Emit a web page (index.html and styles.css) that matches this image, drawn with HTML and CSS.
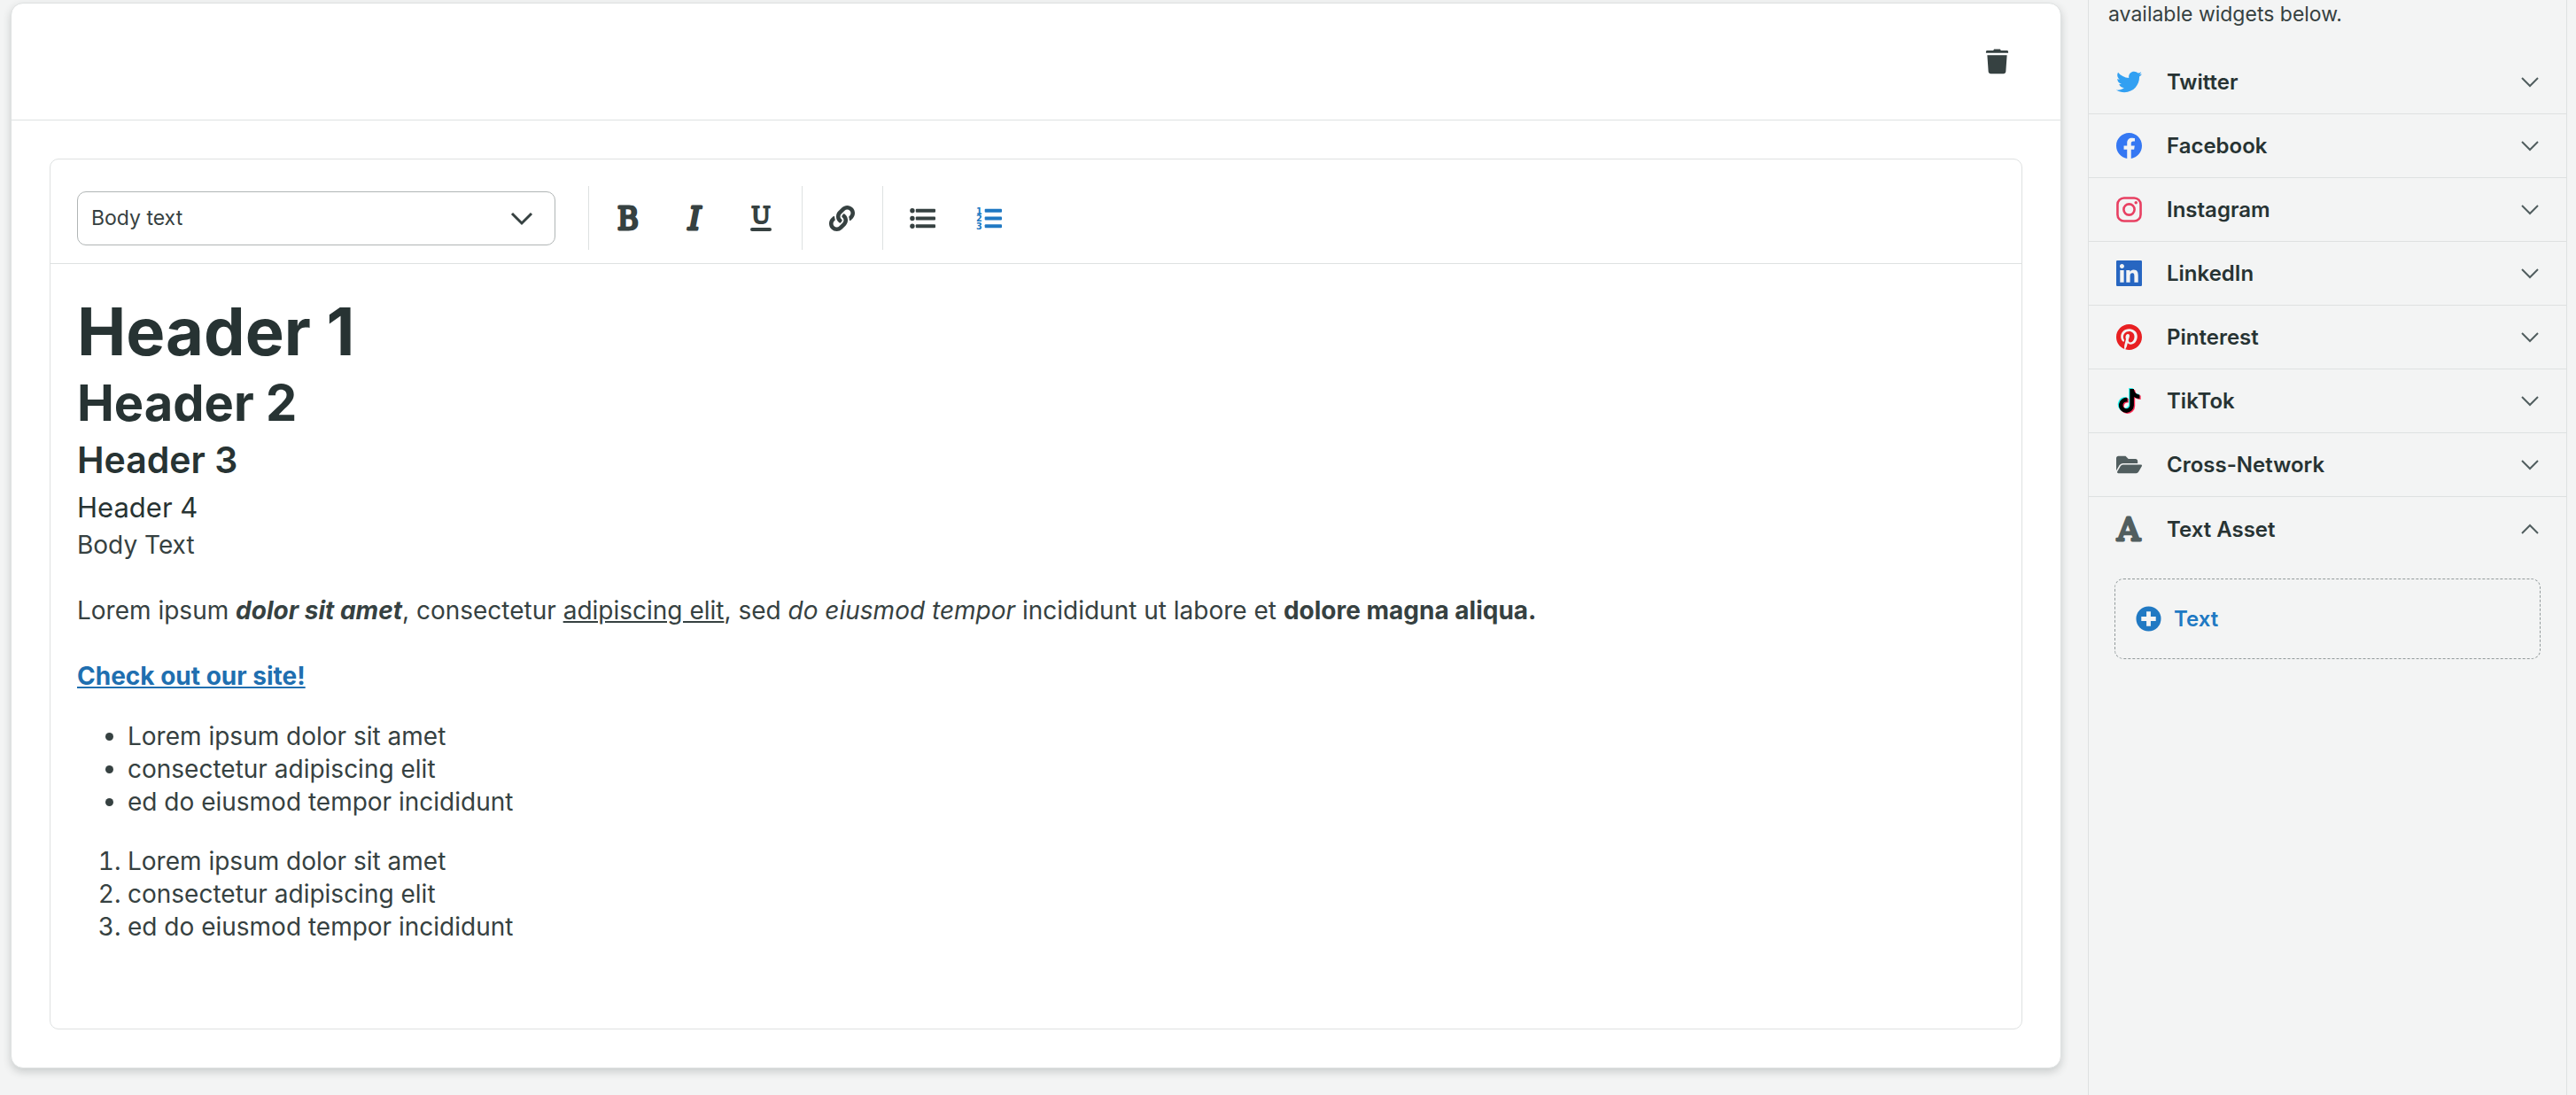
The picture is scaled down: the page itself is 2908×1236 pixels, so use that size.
FILE: index.html
```html
<!DOCTYPE html>
<html lang="en">
<head>
  <meta charset="utf-8">
  <title>Report Builder</title>
  <meta name="viewport" content="width=device-width, initial-scale=1.0">
  <link rel="stylesheet" href="styles.css">
</head>
<body>
  <main class="canvas">
    <section class="card">
      <header class="card-header">
        <button class="icon-button" type="button" aria-label="Delete">
          <svg class="icon" viewBox="0 0 30 30"><path d="M11.500 0.500h7l1 1.500h7a1.500 1.500 0 0 1 1.500 1.500V5H2V3.500A1.500 1.500 0 0 1 3.500 2h7zM3.500 7.500h23l-1.300 19a3 3 0 0 1-3 2.800H7.800a3 3 0 0 1-3-2.800z"/></svg>
        </button>
      </header>
      <div class="card-body">
        <div class="editor">
          <div class="toolbar">
            <div class="select-wrap">
              <select class="select" aria-label="Text style">
                <option>Header 1</option>
                <option>Header 2</option>
                <option>Header 3</option>
                <option>Header 4</option>
                <option selected>Body text</option>
              </select>
              <svg class="select-arrow" viewBox="0 0 26 16"><path d="M2 2l11 11L24 2"/></svg>
            </div>
            <div class="tool-group">
              <button class="tool-button" type="button" aria-label="Bold">
                <svg class="icon-lg" viewBox="0 0 48 48"><text class="glyph narrow" x="24" y="37" text-anchor="middle">B</text></svg>
              </button>
              <button class="tool-button" type="button" aria-label="Italic">
                <svg class="icon-lg" viewBox="0 0 48 48"><text class="glyph italic" x="24" y="37" text-anchor="middle">I</text></svg>
              </button>
              <button class="tool-button" type="button" aria-label="Underline">
                <svg class="icon-lg" viewBox="0 0 48 48"><text class="glyph small" x="24" y="30" text-anchor="middle">U</text><rect x="12" y="35" width="24" height="4" rx="2"/></svg>
              </button>
            </div>
            <div class="tool-group">
              <button class="tool-button" type="button" aria-label="Link">
                <svg class="icon" viewBox="0 0 512 512"><path d="M326.612 185.391c59.747 59.809 58.927 155.698.36 214.59-.11.12-.24.25-.36.37l-67.2 67.2c-59.27 59.27-155.699 59.262-214.96 0-59.27-59.26-59.27-155.7 0-214.96l37.106-37.106c9.84-9.84 26.786-3.3 27.294 10.606.648 17.722 3.826 35.527 9.69 52.721 1.986 5.822.567 12.262-3.783 16.612l-13.087 13.087c-28.026 28.026-28.905 73.66-1.155 101.96 28.024 28.579 74.086 28.749 102.325.51l67.2-67.19c28.191-28.191 28.073-73.757 0-101.83-3.701-3.694-7.429-6.564-10.341-8.569a16.037 16.037 0 0 1-6.947-12.606c-.396-10.567 3.348-21.456 11.698-29.806l21.054-21.055c5.521-5.521 14.182-6.199 20.584-1.731a152.482 152.482 0 0 1 20.522 17.197zM467.547 44.449c-59.261-59.262-155.69-59.27-214.96 0l-67.2 67.2c-.12.12-.25.25-.36.37-58.566 58.892-59.387 154.781.36 214.59a152.454 152.454 0 0 0 20.521 17.196c6.402 4.468 15.064 3.789 20.584-1.731l21.054-21.055c8.35-8.35 12.094-19.239 11.698-29.806a16.037 16.037 0 0 0-6.947-12.606c-2.912-2.005-6.64-4.875-10.341-8.569-28.073-28.073-28.191-73.639 0-101.83l67.2-67.19c28.239-28.239 74.3-28.069 102.325.51 27.75 28.3 26.872 73.934-1.155 101.96l-13.087 13.087c-4.35 4.35-5.769 10.79-3.783 16.612 5.864 17.194 9.042 34.999 9.69 52.721.509 13.906 17.454 20.446 27.294 10.606l37.106-37.106c59.271-59.259 59.271-155.699.001-214.959z"/></svg>
              </button>
            </div>
            <div class="tool-group">
              <button class="tool-button" type="button" aria-label="Bulleted list">
                <svg class="icon" viewBox="0 0 30 30"><circle cx="3" cy="6" r="2.800"/><circle cx="3" cy="15" r="2.800"/><circle cx="3" cy="24" r="2.800"/><rect x="7" y="4" width="23" height="4" rx="1"/><rect x="7" y="13" width="23" height="4" rx="1"/><rect x="7" y="22" width="23" height="4" rx="1"/></svg>
              </button>
              <button class="tool-button active" type="button" aria-label="Numbered list" aria-pressed="true">
                <svg class="icon" viewBox="0 0 30 30"><text class="digit" x="0" y="10">1</text><text class="digit" x="0" y="19">2</text><text class="digit" x="0" y="28">3</text><rect x="10" y="4" width="20" height="4" rx="1"/><rect x="10" y="13" width="20" height="4" rx="1"/><rect x="10" y="22" width="20" height="4" rx="1"/></svg>
              </button>
            </div>
          </div>
          <div class="content" contenteditable="true" spellcheck="false">
            <h1>Header 1</h1>
            <h2>Header 2</h2>
            <h3>Header 3</h3>
            <h4>Header 4</h4>
            <p>Body Text</p>
            <p>Lorem ipsum <strong><em>dolor sit amet</em></strong>, consectetur <u>adipiscing elit</u>, sed <em>do eiusmod tempor</em> incididunt ut labore et <strong>dolore magna aliqua.</strong></p>
            <p><a href="#">Check out our site!</a></p>
            <ul>
              <li>Lorem ipsum dolor sit amet</li>
              <li>consectetur adipiscing elit</li>
              <li>ed do eiusmod tempor incididunt</li>
            </ul>
            <ol>
              <li>Lorem ipsum dolor sit amet</li>
              <li>consectetur adipiscing elit</li>
              <li>ed do eiusmod tempor incididunt</li>
            </ol>
          </div>
        </div>
      </div>
    </section>
  </main>

  <aside class="sidebar">
    <p class="intro">available widgets below.</p>
    <button class="row" type="button">
      <svg class="icon twitter" viewBox="0 0 512 512"><path d="M459.37 151.716c.325 4.548.325 9.097.325 13.645 0 138.72-105.583 298.558-298.558 298.558-59.452 0-114.68-17.219-161.137-47.106 8.447.974 16.568 1.299 25.34 1.299 49.055 0 94.213-16.568 130.274-44.832-46.132-.975-84.792-31.188-98.112-72.772 6.498.974 12.995 1.624 19.818 1.624 9.421 0 18.843-1.3 27.614-3.573-48.081-9.747-84.143-51.98-84.143-102.985v-1.299c13.969 7.797 30.214 12.67 47.431 13.319-28.264-18.843-46.781-51.005-46.781-87.391 0-19.492 5.197-37.36 14.294-52.954 51.655 63.675 129.3 105.258 216.365 109.807-1.624-7.797-2.599-15.918-2.599-24.04 0-57.828 46.782-104.934 104.934-104.934 30.213 0 57.502 12.67 76.67 33.137 23.715-4.548 46.456-13.32 66.599-25.34-7.798 24.366-24.366 44.833-46.132 57.827 21.117-2.273 41.584-8.122 60.426-16.243-14.292 20.791-32.161 39.308-52.628 54.253z"/></svg>
      <span class="label">Twitter</span>
      <svg class="chevron" viewBox="0 0 20 12"><path d="M1 1l9 9 9-9"/></svg>
    </button>
    <button class="row" type="button">
      <svg class="icon facebook" viewBox="0 0 24 24"><path d="M24 12.073c0-6.627-5.373-12-12-12s-12 5.373-12 12c0 5.990 4.388 10.954 10.125 11.854v-8.385H7.078v-3.470h3.047V9.430c0-3.007 1.792-4.669 4.533-4.669 1.312 0 2.686.235 2.686.235v2.953H15.830c-1.491 0-1.956.925-1.956 1.874v2.250h3.328l-.532 3.470h-2.796v8.385C19.612 23.027 24 18.062 24 12.073z"/></svg>
      <span class="label">Facebook</span>
      <svg class="chevron" viewBox="0 0 20 12"><path d="M1 1l9 9 9-9"/></svg>
    </button>
    <button class="row" type="button">
      <svg class="icon instagram" viewBox="0 0 30 30"><rect x="1.500" y="1.500" width="27" height="27" rx="7.500" fill="none" stroke="currentColor" stroke-width="2.700"/><circle cx="15" cy="15" r="6.300" fill="none" stroke="currentColor" stroke-width="2.700"/><circle cx="23" cy="7" r="1.800"/></svg>
      <span class="label">Instagram</span>
      <svg class="chevron" viewBox="0 0 20 12"><path d="M1 1l9 9 9-9"/></svg>
    </button>
    <button class="row" type="button">
      <svg class="icon linkedin" viewBox="0 0 24 24"><path d="M20.447 20.452h-3.554v-5.569c0-1.328-.027-3.037-1.852-3.037-1.853 0-2.136 1.445-2.136 2.939v5.667H9.351V9h3.414v1.561h.046c.477-.9 1.637-1.850 3.370-1.850 3.601 0 4.267 2.370 4.267 5.455v6.286zM5.337 7.433c-1.144 0-2.063-.926-2.063-2.065 0-1.138.920-2.063 2.063-2.063 1.140 0 2.064.925 2.064 2.063 0 1.139-.925 2.065-2.064 2.065zm1.782 13.019H3.555V9h3.564v11.452zM23 0H1a1 1 0 0 0-1 1v22a1 1 0 0 0 1 1h22a1 1 0 0 0 1-1V1a1 1 0 0 0-1-1z" fill-rule="evenodd"/></svg>
      <span class="label">LinkedIn</span>
      <svg class="chevron" viewBox="0 0 20 12"><path d="M1 1l9 9 9-9"/></svg>
    </button>
    <button class="row" type="button">
      <svg class="icon pinterest" viewBox="0 8 496 496"><path d="M496 256c0 137-111 248-248 248-25.600 0-50.200-3.900-73.400-11.100 10.100-16.500 25.200-43.500 30.800-65 3-11.600 15.400-59 15.400-59 8.100 15.400 31.700 28.500 56.800 28.500 74.800 0 128.700-68.800 128.700-154.300 0-81.900-66.900-143.200-152.900-143.200-107 0-163.900 71.800-163.900 150.100 0 36.400 19.400 81.700 50.300 96.100 4.700 2.200 7.200 1.200 8.300-3.300.8-3.400 5-20.300 6.900-28.100.6-2.500.3-4.700-1.700-7.100-10.100-12.500-18.300-35.300-18.300-56.600 0-54.700 41.400-107.600 112-107.600 60.900 0 103.600 41.500 103.600 100.900 0 67.100-33.900 113.600-78 113.600-24.300 0-42.600-20.100-36.700-44.800 7-29.500 20.500-61.300 20.500-82.600 0-19-10.200-34.900-31.400-34.900-24.900 0-44.900 25.700-44.900 60.200 0 22 7.400 36.800 7.400 36.800s-24.500 103.800-29 123.200c-5 21.400-3 51.600-.9 71.200C65.400 450.900 0 361.100 0 256 0 119 111 8 248 8s248 111 248 248z"/></svg>
      <span class="label">Pinterest</span>
      <svg class="chevron" viewBox="0 0 20 12"><path d="M1 1l9 9 9-9"/></svg>
    </button>
    <button class="row" type="button">
      <svg class="icon" viewBox="-52 -14 552 552">
        <defs><path id="note" d="M448,209.910a210.060,210.060,0,0,1-122.770-39.250V349.380A162.550,162.550,0,1,1,185,188.310V278.200a74.620,74.620,0,1,0,52.230,71.180V0l88,0a121.180,121.180,0,0,0,1.860,22.170h0A122.180,122.180,0,0,0,381,102.390a121.430,121.430,0,0,0,67,20.140Z"/></defs>
        <use href="#note" x="-20" y="-12" fill="#25f4ee"/>
        <use href="#note" x="26" y="24" fill="#fe2c55"/>
        <use href="#note" x="2" y="6" fill="#000"/>
      </svg>
      <span class="label">TikTok</span>
      <svg class="chevron" viewBox="0 0 20 12"><path d="M1 1l9 9 9-9"/></svg>
    </button>
    <button class="row" type="button">
      <svg class="icon folder" viewBox="0 0 576 512"><path d="M572.694 292.093L500.270 416.248A63.997 63.997 0 0 1 444.989 448H45.025c-18.523 0-30.064-20.093-20.731-36.093l72.424-124.155A64 64 0 0 1 152 256h399.964c18.523 0 30.064 20.093 20.730 36.093zM152 224h328v-48c0-26.510-21.490-48-48-48H272l-64-64H48C21.490 64 0 85.490 0 112v278.046l69.077-118.418C86.214 242.250 117.989 224 152 224z"/></svg>
      <span class="label">Cross-Network</span>
      <svg class="chevron" viewBox="0 0 20 12"><path d="M1 1l9 9 9-9"/></svg>
    </button>
    <button class="row" type="button" aria-expanded="true">
      <svg class="icon-lg asset" viewBox="0 0 48 48"><text class="glyph" x="24" y="37" text-anchor="middle">A</text></svg>
      <span class="label">Text Asset</span>
      <svg class="chevron" viewBox="0 0 20 12"><path d="M1 11l9-9 9 9"/></svg>
    </button>
    <div class="panel">
      <button class="add-widget" type="button">
        <svg class="icon" viewBox="0 0 30 30"><path fill-rule="evenodd" d="M15 .5a14.500 14.500 0 1 0 0 29 14.500 14.500 0 0 0 0-29zM12.500 6.500h5v6h6v5h-6v6h-5v-6h-6v-5h6z"/></svg>
        <span>Text</span>
      </button>
    </div>
  </aside>
</body>
</html>
```
FILE: styles.css
```css
* {
  box-sizing: border-box;
}
body {
  margin: 0;
  min-height: 100vh;
  display: flex;
  padding-right: 10px;
  background: #f3f4f4;
  color: #364141;
  font-family: Inter, "Liberation Sans", sans-serif;
  font-size: 23px;
}
button {
  border: 0;
  background: none;
  color: inherit;
  font: inherit;
  cursor: pointer;
}
.icon,
.icon-lg {
  display: block;
  width: 29px;
  height: 29px;
  flex: none;
  fill: currentColor;
}
.icon-lg {
  width: 48px;
  height: 48px;
}
/* letter icons, thickened to a slab look */
.glyph {
  font-family: "DejaVu Serif", serif;
  font-size: 36px;
  stroke: currentColor;
  stroke-width: 3;
  stroke-linejoin: round;
}
.glyph.narrow {
  font-family: "DejaVu Serif Condensed", "DejaVu Serif", serif;
}
.glyph.italic {
  font-style: italic;
}
.glyph.small {
  font-size: 26px;
  stroke-width: 2;
}
.digit {
  font-family: "DejaVu Sans", sans-serif;
  font-size: 10px;
  font-weight: bold;
}

/* canvas */
.canvas {
  flex: 1;
  padding: 3px 30px 29px 12px;
}
.card {
  background: #fff;
  border: 1px solid #dee1e1;
  border-radius: 14px;
  box-shadow: 0 4px 10px rgba(39, 51, 51, 0.2);
}
.card-header {
  display: flex;
  align-items: center;
  justify-content: flex-end;
  height: 132px;
  padding: 0 57px;
  border-bottom: 1px solid #dee1e1;
}
.icon-button {
  padding: 0;
}
.card-body {
  padding: 43px;
}

/* editor */
.editor {
  border: 1px solid #dee1e1;
  border-radius: 10px;
}
.toolbar {
  display: flex;
  align-items: center;
  padding: 30px 30px 15px;
  border-bottom: 1px solid #dee1e1;
}
.select-wrap {
  position: relative;
  width: 540px;
  margin-right: 37px;
}
.select {
  display: block;
  width: 100%;
  height: 61px;
  padding: 0 15px;
  appearance: none;
  border: 1px solid #b0b5b5;
  border-radius: 10px;
  background: #fff;
  color: inherit;
  font: inherit;
}
.select-arrow {
  position: absolute;
  top: 23px;
  right: 25px;
  width: 26px;
  height: 16px;
  fill: none;
  stroke: currentColor;
  stroke-width: 3;
  pointer-events: none;
}
.tool-group {
  display: flex;
  gap: 1px;
  padding: 0 9px 0 7px;
  border-left: 1px solid #dee1e1;
}
.tool-button {
  display: flex;
  align-items: center;
  justify-content: center;
  width: 74px;
  height: 72px;
  padding: 0;
}
.tool-button.active {
  color: #2079c3;
}
.content {
  min-height: 863px;
  padding: 30px;
  font-size: 28px;
  line-height: 37px;
  outline: none;
}
.content h1,
.content h2,
.content h3,
.content h4 {
  margin: 0;
  color: #273333;
}
.content h1 {
  font-size: 74px;
  line-height: 92px;
}
.content h2 {
  font-size: 56px;
  line-height: 70px;
}
.content h3 {
  font-size: 41px;
  font-weight: 600;
  line-height: 58px;
}
.content h4 {
  font-size: 31px;
  font-weight: 400;
  line-height: 49px;
}
.content p {
  margin: 0 0 37px;
}
.content p:last-of-type {
  margin-bottom: 31px;
}
.content a {
  color: #1f6fb0;
  font-weight: 700;
}
.content ul,
.content ol {
  margin: 0 0 30px;
  padding-left: 57px;
}

/* sidebar */
.sidebar {
  width: 541px;
  border: 1px solid #dee1e1;
  border-width: 0 1px;
}
.intro {
  margin: 0 0 25px;
  padding: 0 22px;
  line-height: 32px;
}
.row {
  display: flex;
  align-items: center;
  width: 100%;
  height: 72px;
  padding: 0 31px;
  border-bottom: 1px solid #dee1e1;
  text-align: left;
}
.row[aria-expanded="true"] {
  border-bottom: 0;
}
.label {
  flex: 1;
  margin-left: 28px;
  color: #273333;
  font-size: 24px;
  font-weight: 600;
}
.chevron {
  width: 20px;
  height: 12px;
  fill: none;
  stroke: #515e5f;
  stroke-width: 2;
}
.twitter {
  color: #32a0f2;
}
.facebook {
  color: #3578f3;
}
.instagram {
  color: #e84062;
}
.linkedin {
  color: #2766c1;
}
.pinterest {
  color: #e82022;
}
.folder,
.asset {
  color: #515e5f;
}
.asset {
  margin: 0 -9px 0 -10px;
}
.panel {
  padding: 20px 29px;
}
.add-widget {
  display: flex;
  align-items: center;
  gap: 14px;
  width: 100%;
  height: 91px;
  padding: 0 23px;
  border: 1px dashed #929a9b;
  border-radius: 10px;
  color: #2079c3;
  font-size: 24px;
  font-weight: 600;
}
```
